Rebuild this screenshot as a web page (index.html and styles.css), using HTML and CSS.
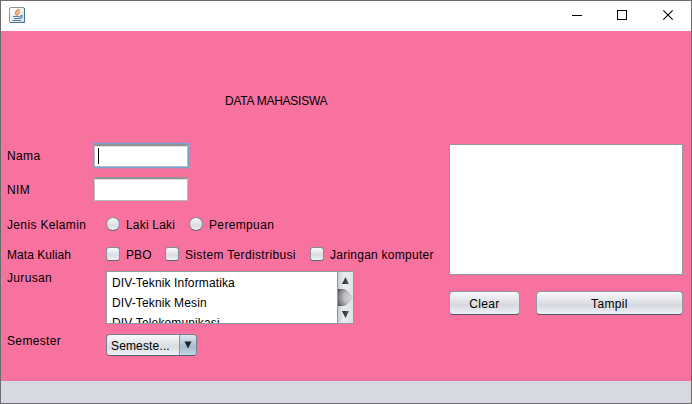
FILE: index.html
```html
<!DOCTYPE html>
<html lang="id">
<head>
<meta charset="utf-8">
<title>Data Mahasiswa</title>
<link rel="stylesheet" href="styles.css">
</head>
<body>
<div class="window">
  <header class="titlebar">
    <svg class="logo" width="16" height="16" viewBox="0 0 16 16">
      <defs><linearGradient id="tile" x2="1" y2="1"><stop offset="0" stop-color="#fff"/><stop offset="1" stop-color="#d3dee6"/></linearGradient></defs>
      <rect x=".5" y=".5" width="15" height="15" rx="1.5" fill="url(#tile)" stroke="#8097a8"/>
      <path d="M1 15.5h14.5V1" fill="none" stroke="#4f7089"/>
      <path d="M10.500 2.500C6 4.500 6 5.500 7.500 8.500M11 4.800C8.500 5.800 8.500 6.500 9 8.500" fill="none" stroke="#e78335" stroke-width="1.400"/>
      <path d="M4 9.500h7.500M5 11.500h6M3.500 13.500h8.500M11.500 8.500h1.500v1.500l-2 1.500" fill="none" stroke="#557f9f" stroke-width="1.200"/>
    </svg>
    <svg class="controls" width="120" height="30" viewBox="0 0 120 30" fill="none" stroke="#000">
      <path d="M1 14.500h10M46.500 9.500h9v9h-9z" shape-rendering="crispEdges"/>
      <path d="M92.300 9.300l9.400 9.400M101.700 9.300l-9.400 9.400" stroke-width="1.100"/>
    </svg>
  </header>
  <main class="content">
    <h1 class="title">DATA MAHASISWA</h1>
    <div class="columns">
      <form class="form">
        <div class="row row-name"><label class="label">Nama</label><div class="field focused"><i class="caret"></i></div></div>
        <div class="row row-nim"><label class="label">NIM</label><div class="field"></div></div>
        <div class="row row-gender"><span class="label">Jenis Kelamin</span>
          <div class="option opt-male"><i class="radio"></i><span>Laki Laki</span></div>
          <div class="option"><i class="radio"></i><span>Perempuan</span></div>
        </div>
        <div class="row row-course"><span class="label">Mata Kuliah</span>
          <div class="option opt-pbo"><i class="check"></i><span>PBO</span></div>
          <div class="option opt-dist"><i class="check"></i><span>Sistem Terdistribusi</span></div>
          <div class="option opt-net"><i class="check"></i><span>Jaringan komputer</span></div>
        </div>
        <div class="row row-major"><span class="label">Jurusan</span>
          <div class="list">
            <ul class="items"><li>DIV-Teknik Informatika</li><li>DIV-Teknik Mesin</li><li>DIV-Telekomunikasi</li></ul>
            <svg class="scroll" width="15" height="51" viewBox="0 0 15 51">
              <defs>
                <linearGradient id="track"><stop offset="0" stop-color="#c8cbd0"/><stop offset=".35" stop-color="#e9ebef"/><stop offset="1" stop-color="#dfe2e7"/></linearGradient>
                <radialGradient id="thumb" gradientUnits="userSpaceOnUse" cx="12" cy="25.500" r="15"><stop offset="0" stop-color="#d2d3d6"/><stop offset=".4" stop-color="#bdbec1"/><stop offset=".75" stop-color="#808080"/><stop offset="1" stop-color="#383838"/></radialGradient>
                <linearGradient id="arrow"><stop offset="0" stop-color="#222"/><stop offset="1" stop-color="#666"/></linearGradient>
              </defs>
              <path d="M0 0h15v51H0z" fill="url(#track)"/>
              <path d="M0 17h6q4 1 9 8.500q-5 7.500-9 8.500H0z" fill="url(#thumb)"/>
              <path d="M7.500 5l3.500 7H4zM4 39h7l-3.500 7z" fill="url(#arrow)"/>
            </svg>
          </div>
        </div>
        <div class="row row-semester"><span class="label">Semester</span>
          <div class="combo"><span class="value">Semeste...</span>
            <span class="drop"><svg width="8" height="8" viewBox="0 0 8 8"><path d="M.5.500h7L4 7.500z" fill="#1d2226"/></svg></span>
          </div>
        </div>
      </form>
      <section class="output">
        <div class="textarea"></div>
        <div class="actions"><button class="button clear">Clear</button><button class="button show">Tampil</button></div>
      </section>
    </div>
  </main>
  <footer class="status"></footer>
</div>
</body>
</html>
```
FILE: styles.css
```css
* { box-sizing: border-box; }
body { margin: 0; font: 12px/16px "Liberation Sans", Arial, sans-serif; letter-spacing: .35px; color: #000; }
.window { width: 692px; height: 404px; border: 1px solid #6b6b6b; display: flex; flex-direction: column; }
.titlebar { height: 30px; flex: none; background: #fff; display: flex; justify-content: space-between; padding-left: 8px; }
.logo { margin-top: 6px; }
.content { height: 350px; flex: none; background: #f8729f; padding: 62px 8px 0 6px; }
.title { margin: 0 0 32px 218px; font: inherit; letter-spacing: -.25px; }
.columns { display: flex; justify-content: space-between; }
.form { width: 436px; }
.row { display: flex; white-space: nowrap; align-items: center; }
.label { width: 99px; flex: none; padding-top: 2px; }
.row-name, .row-nim { height: 27px; }
.row-name .label, .row-nim .label { width: 87px; }
.row-nim { margin-top: 7px; }
.field { width: 94px; height: 24px; border: 1px solid #b9b9bd; border-top: 2px solid #929292; background: #fff; box-shadow: inset 0 1px #e1e1e1; }
.field.focused { box-shadow: 0 0 0 1px #73a4d1, 0 0 0 2px #b58cb980, inset 0 1px #e1e1e1; height: 23px; margin-top: 2px; }
.caret { display: block; width: 1px; height: 16px; margin: 2px 0 0 3px; background: #000; }
.row-gender { height: 16px; margin-top: 14px; }
.row-course { height: 16px; margin-top: 14px; }
.row-course .label { letter-spacing: .05px; }
.option { display: flex; align-items: center; gap: 6px; }
.option span { padding-top: 2px; }
.opt-male { width: 83px; letter-spacing: .2px; }
.opt-pbo { width: 59px; letter-spacing: .1px; }
.opt-dist { width: 145px; }
.opt-net { letter-spacing: .25px; }
.radio, .check { width: 14px; height: 14px; flex: none; border: 1px solid #858b96; border-bottom-color: #606671; background: linear-gradient(#f8f9fb, #dadce1 60%, #edf0f6); }
.radio { border-radius: 50%; }
.check { border-radius: 3px; }
.row-major { margin-top: 9px; align-items: flex-start; }
.row-major .label { padding: 0; margin-top: -1px; }
.list { width: 248px; height: 53px; border: 1px solid #9297a1; background: #fff; display: flex; justify-content: space-between; overflow: hidden; }
.items { margin: 0; padding: 1px 0 0 5px; list-style: none; line-height: 20px; letter-spacing: .13px; }
.scroll { border-left: 1px solid #9297a1; width: 16px; flex: none; }
.row-semester { margin-top: 10px; align-items: flex-start; }
.row-semester .label { padding: 0; margin-top: -1px; }
.combo { width: 91px; height: 22px; border: 1px solid #75818d; border-bottom-color: #55616c; border-radius: 4px; display: flex; overflow: hidden; background: linear-gradient(#f8f9fb, #d9dce0 60%, #eff1f8); }
.value { flex: 1; padding: 3px 0 0 4px; letter-spacing: .15px; }
.drop { width: 17px; border-left: 1px solid #819bad; background: linear-gradient(#dce8f0, #a5bdcd 60%, #c0d8e8); display: flex; align-items: center; justify-content: center; }
.output { width: 234px; padding-top: 3px; }
.textarea { height: 131px; border: 1px solid #9297a1; background: #fff; }
.actions { display: flex; gap: 16px; margin-top: 16px; }
.button { height: 24px; padding: 1px 0 0; font: inherit; letter-spacing: .35px; color: #000; border: 1px solid #9196a0; border-bottom-color: #535963; border-radius: 4px; background: linear-gradient(#f8f9fb, #d7d9de 60%, #edf0fa); }
.clear { width: 71px; }
.show { width: 147px; }
.status { flex: 1; background: #d6d9df; }
```
